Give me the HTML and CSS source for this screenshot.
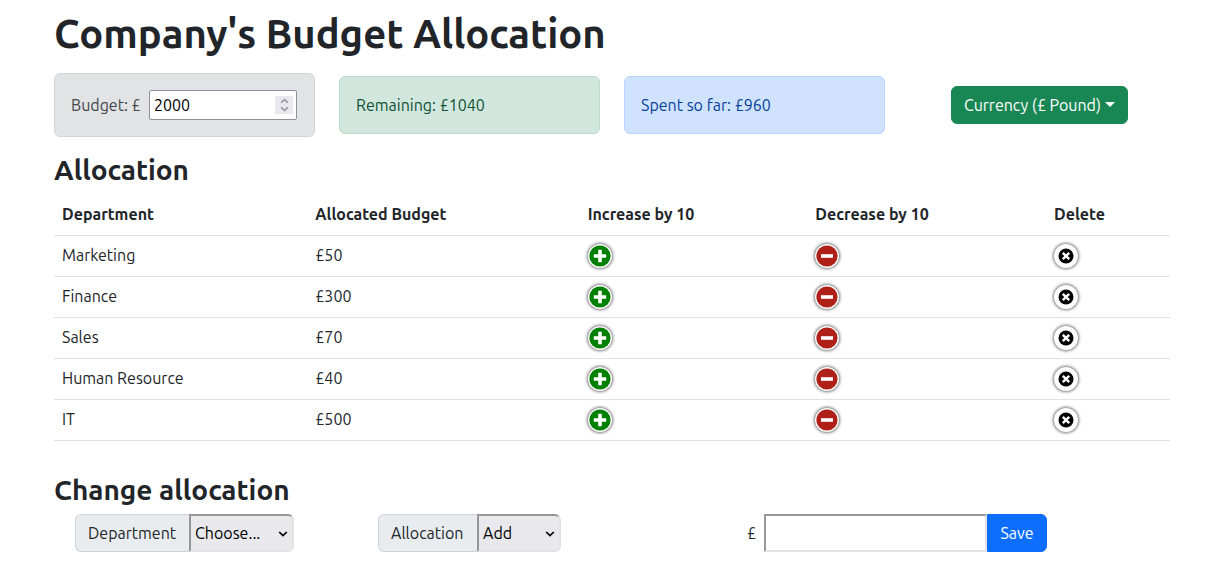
FILE: index.html
```html
<!DOCTYPE html>
<html lang="en">
<head>
<meta charset="utf-8">
<meta name="viewport" content="width=device-width, initial-scale=1">
<title>Company's Budget Allocation</title>
<link rel="stylesheet" href="styles.css">
</head>
<body>
<svg width="0" height="0" class="sprite" aria-hidden="true">
  <symbol id="plus" viewBox="0 0 24 24"><circle cx="12" cy="12" r="10.6" fill="#008000"/><path d="M12 5.8v12.4M5.8 12h12.4" stroke="#fff" stroke-width="3.6"/></symbol>
  <symbol id="minus" viewBox="0 0 24 24"><circle cx="12" cy="12" r="10.6" fill="#af2018"/><path d="M6 12h12" stroke="#fff" stroke-width="3.6"/></symbol>
  <symbol id="cross" viewBox="0 0 24 24"><circle cx="12" cy="12" r="7.5" fill="#000"/><path d="M8.8 8.8l6.4 6.4M15.2 8.8l-6.4 6.4" stroke="#fff" stroke-width="2.4"/></symbol>
  <symbol id="chevron" viewBox="0 0 10 6"><path d="M1.2 1l3.8 3.6L8.8 1" fill="none" stroke="currentColor" stroke-width="1.7"/></symbol>
</svg>
<main class="container">
  <h1>Company's Budget Allocation</h1>
  <div class="summary">
    <div class="alert alert-secondary">
      <label for="budget">Budget: £</label>
      <span class="number">
        <input id="budget" type="number" value="2000" step="10">
        <span class="spinner" aria-hidden="true">
          <svg class="up"><use href="#chevron"/></svg>
          <svg><use href="#chevron"/></svg>
        </span>
      </span>
    </div>
    <div class="alert alert-success">Remaining: £1040</div>
    <div class="alert alert-primary">Spent so far: £960</div>
    <div class="currency"><button type="button" class="btn btn-success dropdown">Currency (£ Pound)</button></div>
  </div>

  <h2>Allocation</h2>
  <table class="table">
    <thead>
      <tr><th class="col-dept" scope="col">Department</th><th class="col-budget" scope="col">Allocated Budget</th><th class="col-inc" scope="col">Increase by 10</th><th class="col-dec" scope="col">Decrease by 10</th><th scope="col">Delete</th></tr>
    </thead>
    <tbody>
      <tr><td>Marketing</td><td>£50</td><td><button class="round" aria-label="Increase Marketing"><svg><use href="#plus"/></svg></button></td><td><button class="round" aria-label="Decrease Marketing"><svg><use href="#minus"/></svg></button></td><td><button class="round" aria-label="Delete Marketing"><svg><use href="#cross"/></svg></button></td></tr>
      <tr><td>Finance</td><td>£300</td><td><button class="round" aria-label="Increase Finance"><svg><use href="#plus"/></svg></button></td><td><button class="round" aria-label="Decrease Finance"><svg><use href="#minus"/></svg></button></td><td><button class="round" aria-label="Delete Finance"><svg><use href="#cross"/></svg></button></td></tr>
      <tr><td>Sales</td><td>£70</td><td><button class="round" aria-label="Increase Sales"><svg><use href="#plus"/></svg></button></td><td><button class="round" aria-label="Decrease Sales"><svg><use href="#minus"/></svg></button></td><td><button class="round" aria-label="Delete Sales"><svg><use href="#cross"/></svg></button></td></tr>
      <tr><td>Human Resource</td><td>£40</td><td><button class="round" aria-label="Increase Human Resource"><svg><use href="#plus"/></svg></button></td><td><button class="round" aria-label="Decrease Human Resource"><svg><use href="#minus"/></svg></button></td><td><button class="round" aria-label="Delete Human Resource"><svg><use href="#cross"/></svg></button></td></tr>
      <tr><td>IT</td><td>£500</td><td><button class="round" aria-label="Increase IT"><svg><use href="#plus"/></svg></button></td><td><button class="round" aria-label="Decrease IT"><svg><use href="#minus"/></svg></button></td><td><button class="round" aria-label="Delete IT"><svg><use href="#cross"/></svg></button></td></tr>
    </tbody>
  </table>

  <h2>Change allocation</h2>
  <form class="change">
    <div class="group group-dept">
      <label class="addon" for="dept">Department</label>
      <span class="select">
        <select id="dept"><option>Choose...</option><option>Marketing</option><option>Finance</option><option>Sales</option><option>Human Resource</option><option>IT</option></select>
        <svg><use href="#chevron"/></svg>
      </span>
    </div>
    <div class="group group-action">
      <label class="addon" for="action">Allocation</label>
      <span class="select">
        <select id="action"><option>Add</option><option>Reduce</option></select>
        <svg><use href="#chevron"/></svg>
      </span>
    </div>
    <div class="group">
      <label class="sign" for="cost">£</label>
      <input class="cost" id="cost" type="number">
      <button type="button" class="btn btn-primary">Save</button>
    </div>
  </form>
</main>
</body>
</html>
```
FILE: styles.css
```css
*, *::before, *::after { box-sizing: border-box; }
body {
  margin: 0;
  padding-left: 4px;
  background: #fff;
  color: #212529;
  font: 16px/24px Ubuntu, "Noto Sans", sans-serif;
}
.sprite { position: absolute; }
.container { max-width: 1140px; margin: 0 auto; padding: 10px 12px 0; }
h1, h2 { margin: 0; font-family: "Ubuntu Medium", Ubuntu, "Noto Sans", sans-serif; font-weight: 600; }
h1 { font-size: 40px; line-height: 48px; }
h2 { font-size: 28px; line-height: 34px; }
button, input, select { font: inherit; margin: 0; }

.summary {
  display: grid;
  grid-template-columns: repeat(4, 1fr);
  gap: 24px;
  align-items: center;
  margin: 15px 0 16px;
}
.alert { padding: 16px; border: 1px solid; border-radius: 6px; }
.alert-secondary { display: flex; align-items: center; justify-content: space-between; padding-right: 17px; color: #41464b; background: #e2e3e5; border-color: #d3d6d8; white-space: nowrap; }
.alert-success { color: #0f5132; background: #d1e7dd; border-color: #badbcc; }
.alert-primary { color: #084298; background: #cfe2ff; border-color: #b6d4fe; }
.number { position: relative; width: 148px; }
.number input {
  display: block;
  width: 100%;
  height: 30px;
  padding: 0 4px;
  border: 1px solid #8f8f9d;
  border-radius: 2px;
  background: #fff;
  color: #000;
}
input[type="number"] { appearance: textfield; }
input::-webkit-inner-spin-button { appearance: none; margin: 0; }
.spinner {
  position: absolute;
  top: 6px;
  right: 4px;
  width: 18px;
  height: 18px;
  display: flex;
  flex-direction: column;
  align-items: center;
  justify-content: space-between;
  padding: 2px 0;
  background: #e9e9ed;
  color: #8f8f9d;
}
.spinner svg { width: 9px; height: 6px; }
.spinner .up { transform: rotate(180deg); }

.currency { text-align: center; }
.btn { padding: 6px 12px; border: 1px solid; border-radius: 6px; color: #fff; white-space: nowrap; }
.btn-success { background: #198754; border-color: #198754; }
.btn-primary { background: #0d6efd; border-color: #0d6efd; border-radius: 0 6px 6px 0; width: 60px; }
.dropdown::after {
  content: "";
  display: inline-block;
  margin-left: 4px;
  vertical-align: 4px;
  border: 5px solid transparent;
  border-top-color: #fff;
  border-bottom: 0;
}

.table { width: 100%; margin: 8px 0 32px; border-spacing: 0; table-layout: fixed; }
.table th, .table td { border-bottom: 1px solid #dee2e6; text-align: left; vertical-align: top; }
.table th { padding: 7px 8px 9px; font-weight: 700; }
.table td { padding: 7px 8px 8px; }
.col-dept { width: 22.7%; }
.col-budget { width: 24.4%; }
.col-inc { width: 20.4%; }
.col-dec { width: 21.4%; }
.round {
  display: block;
  width: 24px;
  height: 24px;
  margin: 1px 0 0;
  padding: 0;
  border: 0;
  border-radius: 50%;
  background: #fff;
  box-shadow: 0 0 3px 1px #777;
}
.round svg { display: block; width: 24px; height: 24px; }

.change { display: flex; padding: 7px 0 0 21px; }
.group { display: flex; align-items: stretch; }
.group-dept { margin-right: 84px; }
.group-action { margin-right: 186px; }
.addon { padding: 6px 12px; border: 1px solid #ced4da; border-right: 0; border-radius: 6px 0 0 6px; background: #e9ecef; }
.group-dept .addon { width: 114px; }
.group-action .addon { width: 99px; }
.select { position: relative; color: #000; }
.select select {
  appearance: none;
  height: 38px;
  padding: 0 4px;
  border: 2px solid;
  border-color: #979797 #e3e3e3 #e3e3e3 #979797;
  border-radius: 0 6px 6px 0;
  background: #e9e9ed;
  color: #000;
}
.group-dept select { width: 105px; }
.group-action select { width: 84px; }
.select svg { position: absolute; right: 6px; top: 17px; width: 10px; height: 6px; pointer-events: none; }
.sign { padding: 7px 8px 7px 0; }
.cost { width: 223px; height: 38px; border: 2px solid; border-color: #979797 #e3e3e3 #e3e3e3 #979797; background: #fff; }
```
